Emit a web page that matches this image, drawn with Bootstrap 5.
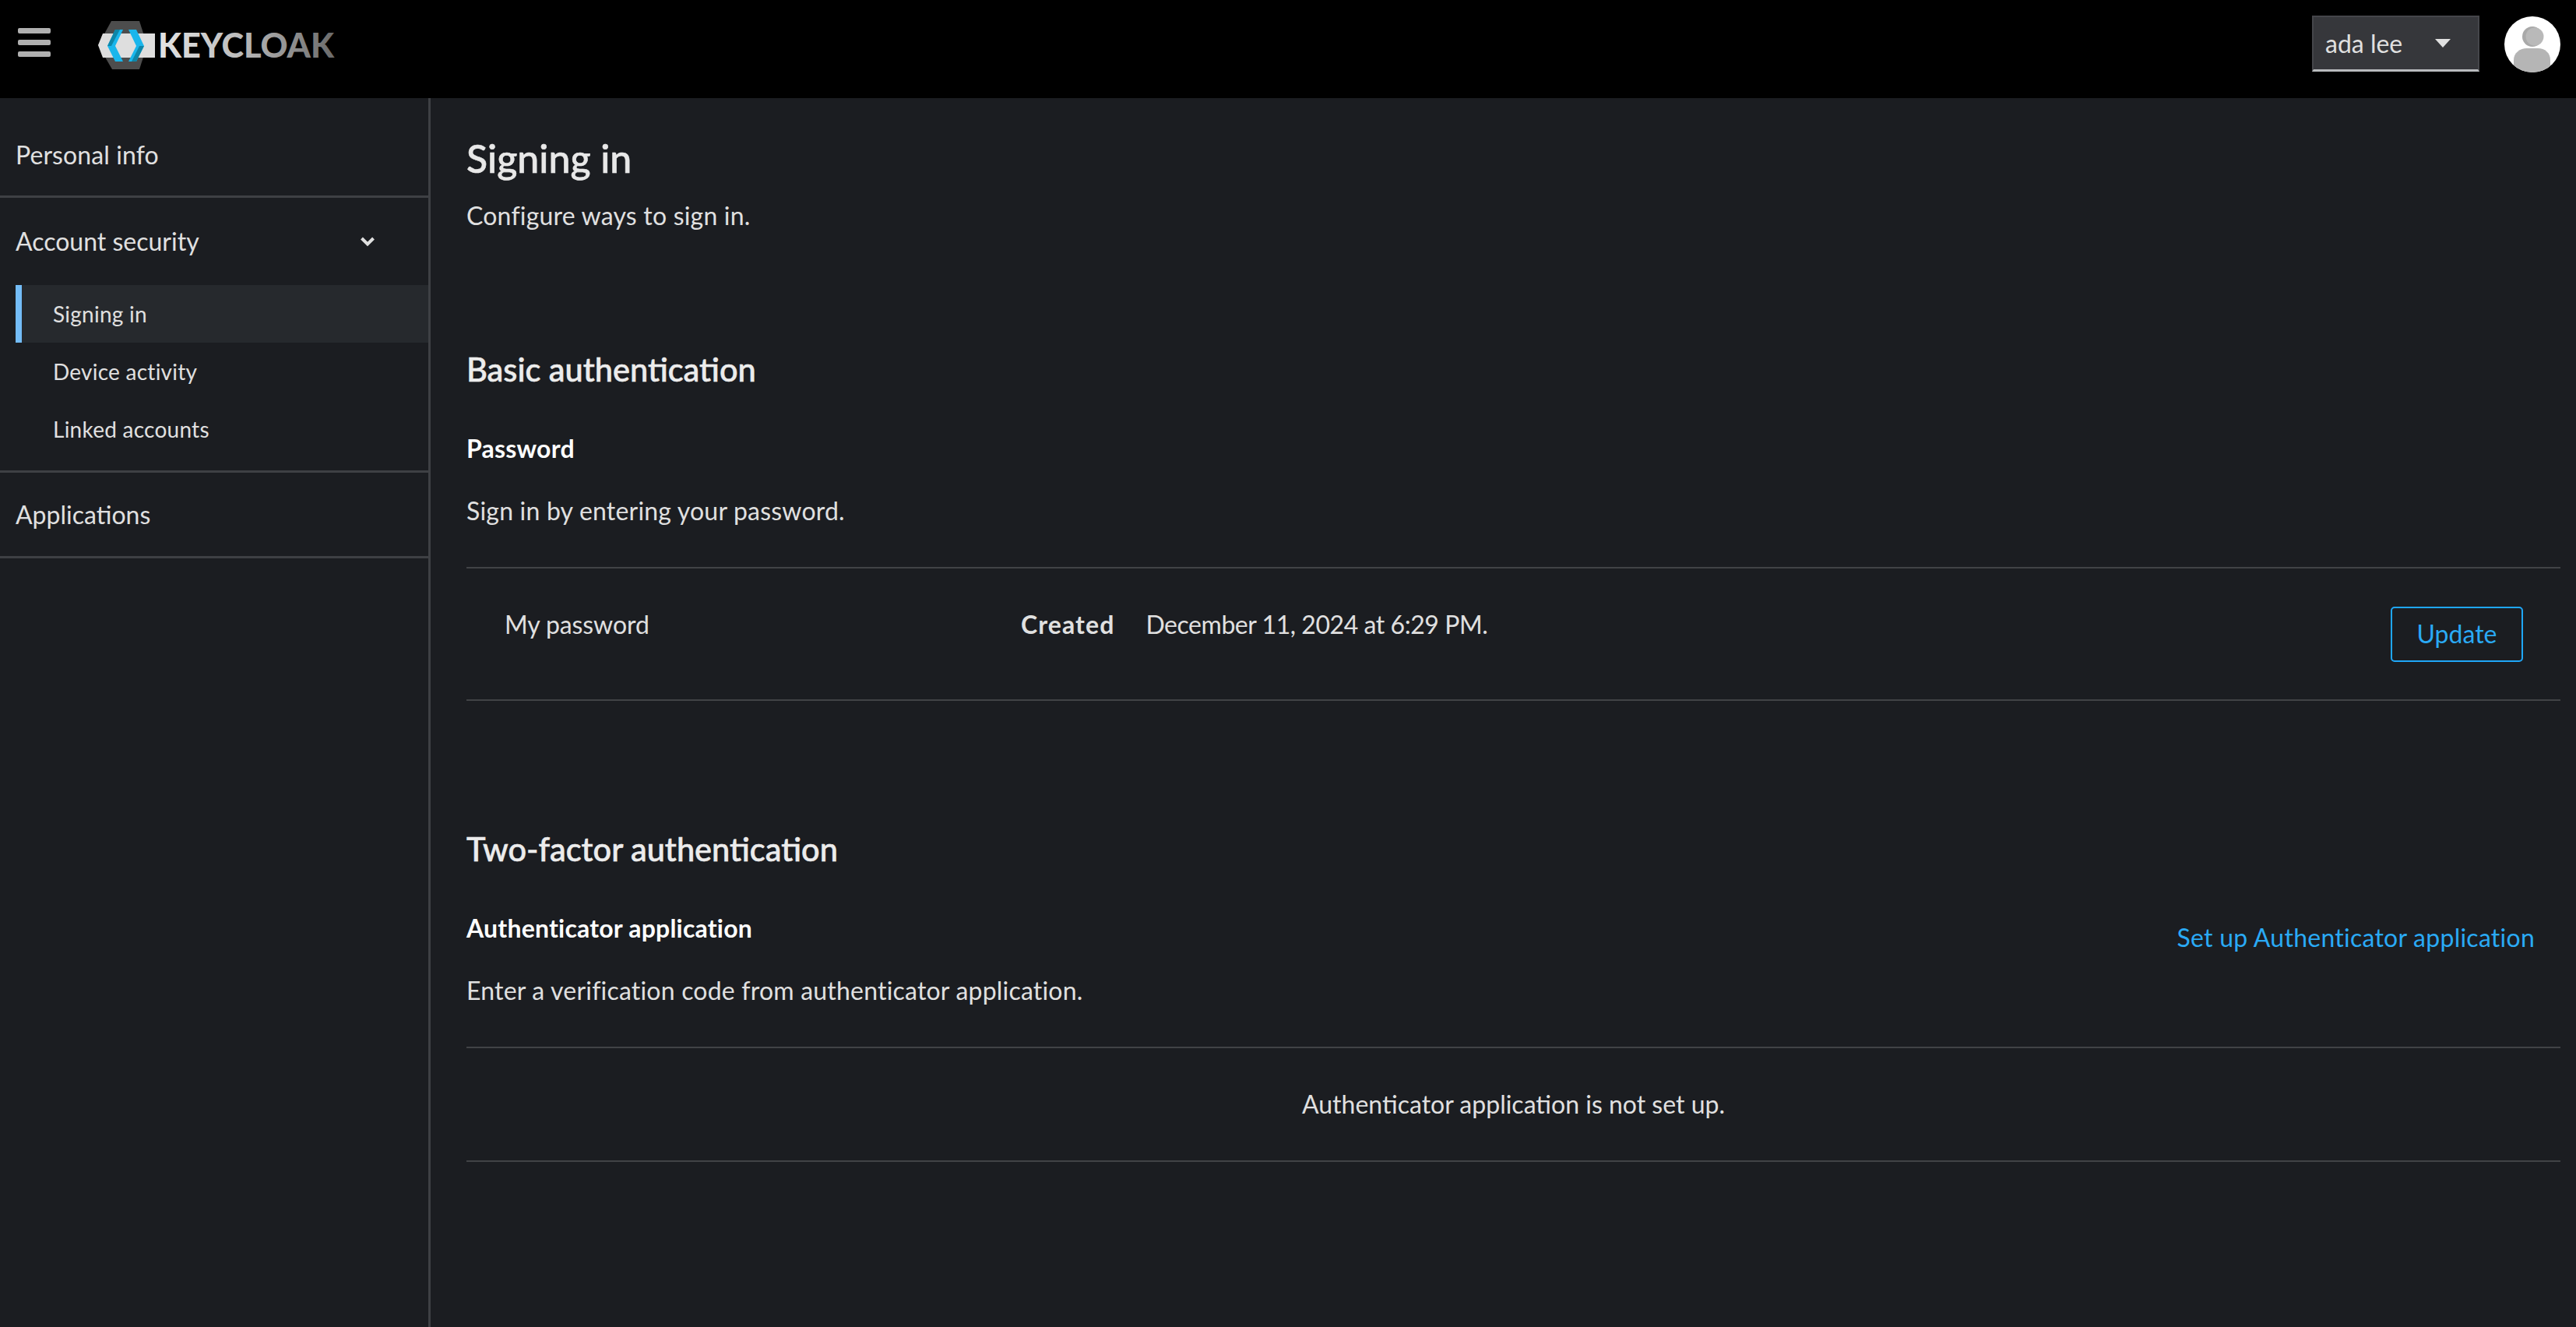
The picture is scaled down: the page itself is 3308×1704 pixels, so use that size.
<!DOCTYPE html>
<html lang="en" data-bs-theme="dark">
<head>
<meta charset="utf-8">
<title>Signing in</title>
<link rel="stylesheet" href="https://cdn.jsdelivr.net/npm/bootstrap@5.3.0/dist/css/bootstrap.min.css">
<style>
html,body{height:100%;}
body{background:#1b1d21;color:#e0e0e0;font-family:"Lato","Noto Sans",sans-serif;font-size:32px;line-height:1.5;overflow:hidden;}
.kc-top{height:126px;background:#000;}
.kc-burger{width:42px;margin-left:23px;gap:8px;margin-top:-17px;}
.kc-burger span{display:block;height:7px;border-radius:2px;background:#b0b0b0;}
.kc-logo{margin-left:61px;margin-top:-10px;display:block;}
.kc-logo text{font-family:"Lato",sans-serif;font-weight:900;font-size:43px;}
.kc-user{width:215px;height:72px;background:#36373b;border:2px solid #45464a;border-bottom:3px solid #b8bbbe;color:#e0e0e0;padding:0 15px;font-size:32px;margin-right:32px;margin-top:-14px;}
.kc-caret{width:0;height:0;border-left:10px solid transparent;border-right:10px solid transparent;border-top:11px solid #e0e0e0;margin-left:42px;}
.kc-avatar{margin-right:20px;margin-top:-12px;display:block;}
.kc-shell{height:1578px;}
.kc-side{width:553px;border-right:3px solid #3e4044;flex:none;}
.kc-sec{border-bottom:3px solid #3e4044;}
.kc-sec1{height:128px;padding:20px 20px 0;letter-spacing:.1px;}
.kc-sec2{height:353px;}
.kc-sec3{height:110px;padding:0 20px;}
.kc-head{height:112px;padding:0 20px;}
.kc-chev{margin-left:auto;margin-right:48px;}
.kc-sub{margin-left:20px;}
.kc-sub a{display:block;height:74px;line-height:74px;padding-left:48px;color:#e0e0e0;font-size:28px;letter-spacing:.25px;text-decoration:none;}
.kc-sub a.kc-on{background:#26292d;border-left:8px solid #73bcf7;padding-left:40px;}
.kc-main{padding:0 20px 0 46px;min-width:0;}
.kc-h1{font-size:50px;font-weight:500;line-height:66px;margin:44px 0 0;color:#e8e8e8;-webkit-text-stroke:.6px #e8e8e8;}
.kc-lead{line-height:48px;margin:17px 0 0;letter-spacing:.2px;}
.kc-h2{font-size:41.500px;font-weight:500;line-height:56px;margin:0;color:#ececec;-webkit-text-stroke:.6px #ececec;}
.kc-h3{font-size:32px;font-weight:700;line-height:48px;margin:0;letter-spacing:.2px;}
.kc-p{line-height:48px;margin:32px 0 0;letter-spacing:.2px;}
.kc-row{border-top:2px solid #414346;border-bottom:2px solid #414346;}
.kc-pw{height:172px;margin-top:48px;padding:0 48px 0 49px;}
.kc-name{width:663px;margin-bottom:24px;letter-spacing:-.1px;}
.kc-meta{margin-bottom:24px;}
.kc-meta strong{letter-spacing:1.100px;}
.kc-date{margin-left:40px;letter-spacing:-.45px;}
.kc-btn{width:170px;height:71px;border:2px solid #1fa7f8;border-radius:5px;color:#2aaaf5;font-size:32px;padding:0;background:transparent;}
.kc-btn:hover{color:#2aaaf5;border-color:#1fa7f8;background:transparent;}
.kc-link{color:#2aaaf5;text-decoration:none;margin-right:33px;margin-bottom:57px;letter-spacing:.25px;}
.kc-empty{height:148px;margin-top:48px;}
.kc-gbasic{margin-top:145px;}
.kc-g1{margin-top:50px;}
.kc-g2{margin-top:162px;}
.kc-g3{margin-top:50px;}
</style>
</head>
<body>
<header class="kc-top d-flex align-items-center">
  <div class="kc-burger d-flex flex-column"><span></span><span></span><span></span></div>
  <svg class="kc-logo" width="312" height="64" viewBox="0 0 312 64" role="img" aria-label="Keycloak logo">
    <defs>
      <linearGradient id="kcg" x1="0" x2="1" y1="0" y2="0">
        <stop offset="0" stop-color="#e4e4e4"/><stop offset=".45" stop-color="#bdbdbd"/><stop offset="1" stop-color="#6a6a6a"/>
      </linearGradient>
    </defs>
    <polygon points="17,1 53,1 63,32 53,63 18,63 0,32" fill="#4d4d4d"/>
    <polygon points="0,32 6,17 73,17 73,48 6,48" fill="#dedede"/>
    <polygon points="22,12 32,12 22,33 32,53 22,53 12,33" fill="#1ab6ec"/>
    <polygon points="22,12 28,12 17,33 12,33" fill="#0f86a8"/>
    <polygon points="39,12 49,12 59,33 49,53 39,53 49,33" fill="#1ab6ec"/>
    <polygon points="59,33 49,53 43,53 53,33" fill="#0f86a8"/>
    <text x="77" y="48" fill="url(#kcg)" textLength="226" lengthAdjust="spacingAndGlyphs">KEYCLOAK</text>
  </svg>
  <button type="button" class="kc-user btn rounded-0 d-flex align-items-center ms-auto">ada lee<span class="kc-caret"></span></button>
  <svg class="kc-avatar" width="72" height="72" viewBox="0 0 72 72" role="img" aria-label="Avatar">
    <defs><clipPath id="kcc"><circle cx="36" cy="36" r="36"/></clipPath></defs>
    <g clip-path="url(#kcc)">
      <rect width="72" height="72" fill="#fff"/>
      <circle cx="36" cy="26" r="13" fill="#a9a9a9"/>
      <circle cx="39" cy="26" r="11.500" fill="#b9b9b9"/>
      <path d="M12 72 V56 C12 47 20 41 29 41 H43 C52 41 59 47 59 56 V72 Z" fill="#b5b5b5"/>
    </g>
  </svg>
</header>
<div class="kc-shell d-flex">
  <nav class="kc-side">
    <div class="kc-sec kc-sec1 d-flex align-items-center">Personal info</div>
    <div class="kc-sec kc-sec2">
      <div class="kc-head d-flex align-items-center">Account security
        <svg class="kc-chev" width="20" height="14" viewBox="0 0 20 14"><path d="M2.500 3 L10 10.500 L17.500 3" fill="none" stroke="#e0e0e0" stroke-width="4"/></svg>
      </div>
      <div class="kc-sub">
        <a class="kc-on" href="#">Signing in</a>
        <a href="#">Device activity</a>
        <a href="#">Linked accounts</a>
      </div>
    </div>
    <div class="kc-sec kc-sec3 d-flex align-items-center">Applications</div>
  </nav>
  <main class="kc-main flex-grow-1">
    <h1 class="kc-h1">Signing in</h1>
    <p class="kc-lead">Configure ways to sign in.</p>
    <h2 class="kc-h2 kc-gbasic">Basic authentication</h2>
    <h3 class="kc-h3 kc-g1">Password</h3>
    <p class="kc-p">Sign in by entering your password.</p>
    <div class="kc-row kc-pw d-flex align-items-center">
      <div class="kc-name">My password</div>
      <div class="kc-meta"><strong>Created</strong><span class="kc-date">December 11, 2024 at 6:29 PM.</span></div>
      <button type="button" class="btn kc-btn ms-auto">Update</button>
    </div>
    <h2 class="kc-h2 kc-g2">Two-factor authentication</h2>
    <div class="d-flex justify-content-between align-items-center kc-g3">
      <div>
        <h3 class="kc-h3">Authenticator application</h3>
        <p class="kc-p">Enter a verification code from authenticator application.</p>
      </div>
      <a class="kc-link" href="#">Set up Authenticator application</a>
    </div>
    <div class="kc-row kc-empty d-flex align-items-center justify-content-center">Authenticator application is not set up.</div>
  </main>
</div>
</body>
</html>
